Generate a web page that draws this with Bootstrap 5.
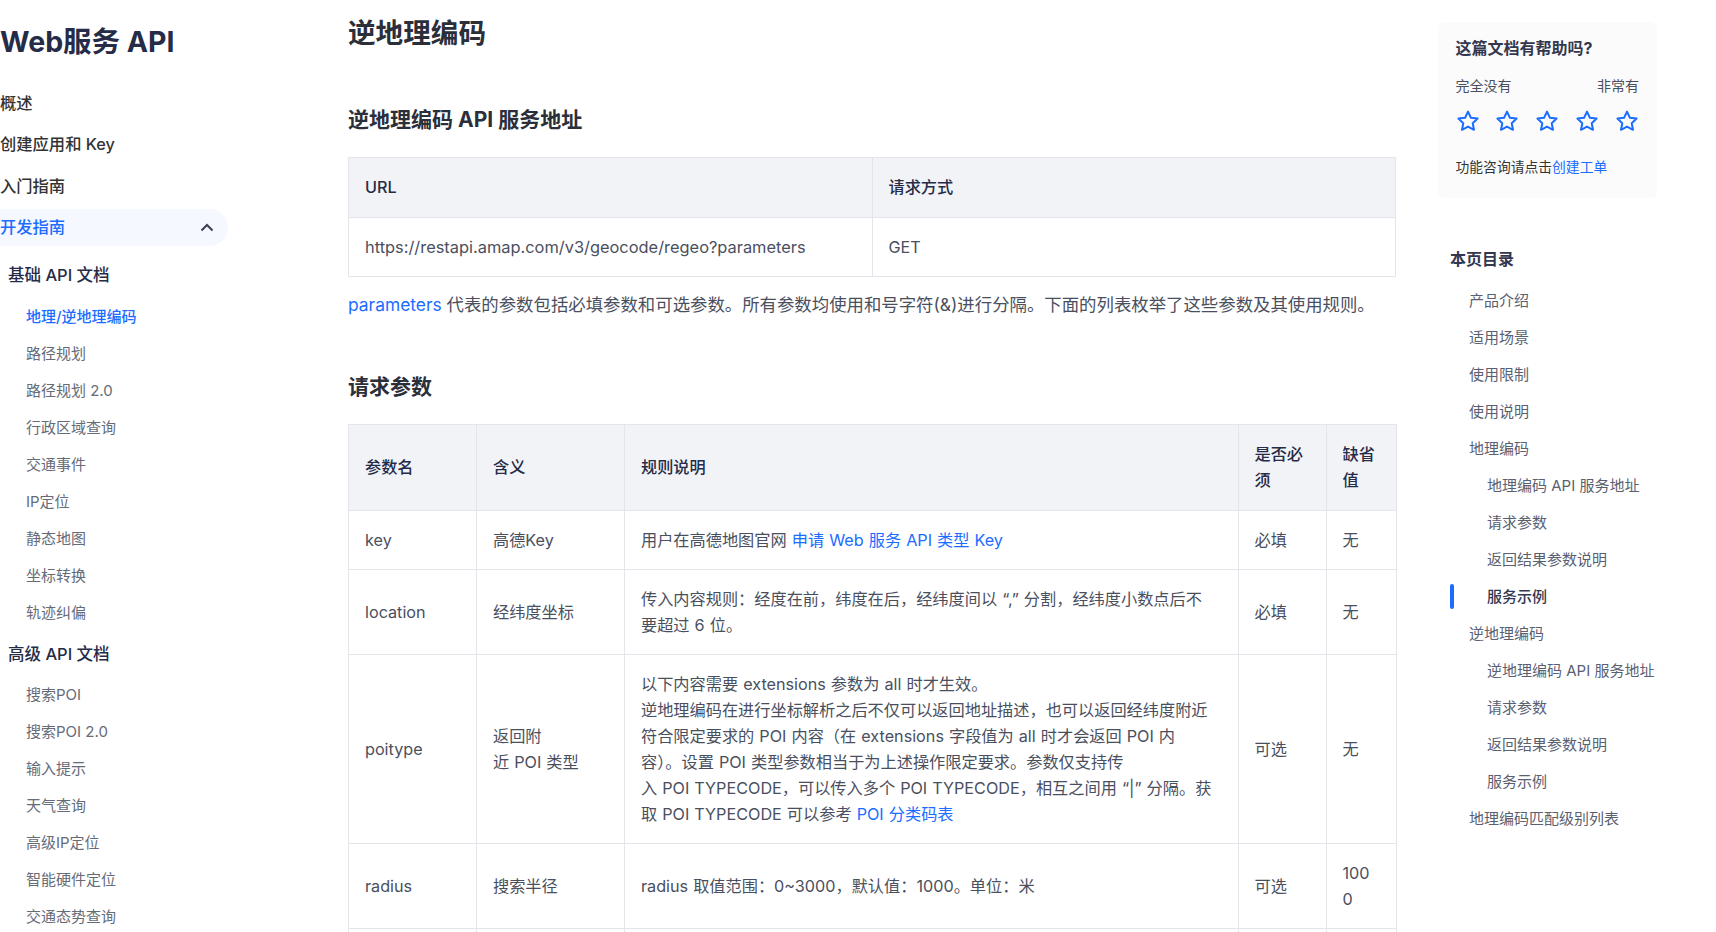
<!DOCTYPE html>
<html lang="zh">

<head>
  <meta charset="utf-8">
  <meta name="viewport" content="width=device-width">
  <title>逆地理编码</title>
  <link href="https://cdn.jsdelivr.net/npm/bootstrap@5.3.3/dist/css/bootstrap.min.css" rel="stylesheet" />
  <style>
    html, body { height: 932px; overflow: hidden; }
    body { font-family: Inter, "Noto Sans CJK SC", sans-serif; font-size: 16px; color: #4a4f60; background: #fff; }
    a { color: #1b6cff; text-decoration: none; }

    .side { width: 228px; }
    .side-title { font-size: 28.5px; line-height: 36px; font-weight: 700; color: #262b47; margin: 24px 0 24.5px; }
    .nav-top { height: 37px; margin-bottom: 4.6px; line-height: 37px; font-size: 16.3px; color: #333; font-weight: 500; }
    .nav-top.active { color: #1b6cff; background: #f5f8ff; border-radius: 0 19px 19px 0; }
    .nav-head { height: 37px; line-height: 37px; margin: 11px 0 3.5px; padding-left: 8px; font-size: 16.5px; color: #262b47; font-weight: 500; }
    .nav-head.next { margin-top: 5px; }
    .nav-sub { height: 37px; line-height: 37px; padding-left: 26px; font-size: 15px; color: #666b78; }
    .nav-sub.active { color: #1b6cff; font-weight: 500; }
    .chevron { width: 14px; height: 9px; margin-right: 14px; }

    .content { width: 1048px; margin-left: 120px; }
    .content h1 { font-size: 27.6px; line-height: 40px; font-weight: 700; color: #2b2f3a; margin: 13px 0 52px; }
    .content h2 { font-size: 21px; line-height: 30px; font-weight: 700; color: #2b2f3a; margin: 0 0 22px; }
    .content p { font-size: 17.4px; line-height: 26px; margin: 15px 0 54px; }
    .doc-table { table-layout: fixed; border-color: #e3e5ea; margin: 0; font-size: 16.2px; line-height: 26px; word-spacing: .5px; --bs-table-color: #4a4f60; }
    .doc-table > :not(caption) > * > * { padding: 16px; vertical-align: middle; word-break: break-all; }
    .doc-table > thead > tr > th { padding-bottom: 17px; background: #f2f3f7; color: #262b47; font-weight: 500; }
    .doc-table .url { font-size: 16.4px; word-spacing: 0; }
    .doc-table .empty-row td { height: 60px; }
    .c1 { width: 128px; } .c2 { width: 148px; } .c3 { width: 613.5px; } .c4 { width: 88px; } .c5 { width: 70.5px; }

    .right { width: 219px; margin-left: 42px; }
    .rate-card { height: 176px; margin-top: 22px; padding: 14px 18px 14px 17.5px; background: #fbfbfb; border-radius: 6px; font-size: 14px; }
    .rate-title { font-size: 16px; line-height: 24px; font-weight: 700; color: #333850; }
    .rate-labels { margin-top: 16px; line-height: 20px; color: #4a4f60; }
    .rate-stars { margin-top: 13px; }
    .rate-stars svg { width: 24px; height: 24px; }
    .rate-foot { margin-top: 24px; font-size: 13.8px; line-height: 20px; color: #333; }
    .toc { margin-top: 49px; font-size: 15px; color: #5a5f72; }
    .toc-title { margin-left: 12px; font-size: 16px; line-height: 24px; font-weight: 700; color: #333850; margin-bottom: 11px; }
    .toc-item { height: 37.04px; line-height: 37px; padding-left: 31px; white-space: nowrap; }
    .toc-item.lv2 { padding-left: 49px; }
    .toc-item.active { font-weight: 500; color: #333850; }
    .toc-item.active::before { content: ""; position: absolute; left: 12px; top: 6px; width: 4px; height: 25px; border-radius: 2px; background: #1b6cff; }
  </style>
</head>

<body class="d-flex align-items-start">
  <nav class="side flex-shrink-0">
    <div class="side-title">Web服务 API</div>
    <div class="nav-top">概述</div>
    <div class="nav-top">创建应用和 Key</div>
    <div class="nav-top">入门指南</div>
    <div class="nav-top active d-flex justify-content-between align-items-center">
      开发指南
      <svg class="chevron" viewBox="0 0 14 9" fill="none" stroke="#3a4055" stroke-width="2"><path d="M1.5 7.5 7 2l5.5 5.5" /></svg>
    </div>
    <div class="nav-head">基础 API 文档</div>
    <div class="nav-sub active">地理/逆地理编码</div>
    <div class="nav-sub">路径规划</div>
    <div class="nav-sub">路径规划 2.0</div>
    <div class="nav-sub">行政区域查询</div>
    <div class="nav-sub">交通事件</div>
    <div class="nav-sub">IP定位</div>
    <div class="nav-sub">静态地图</div>
    <div class="nav-sub">坐标转换</div>
    <div class="nav-sub">轨迹纠偏</div>
    <div class="nav-head next">高级 API 文档</div>
    <div class="nav-sub">搜索POI</div>
    <div class="nav-sub">搜索POI 2.0</div>
    <div class="nav-sub">输入提示</div>
    <div class="nav-sub">天气查询</div>
    <div class="nav-sub">高级IP定位</div>
    <div class="nav-sub">智能硬件定位</div>
    <div class="nav-sub">交通态势查询</div>
  </nav>

  <main class="content flex-shrink-0">
    <h1>逆地理编码</h1>
    <h2>逆地理编码 API 服务地址</h2>
    <table class="table table-bordered doc-table">
      <thead>
        <tr><th>URL</th><th>请求方式</th></tr>
      </thead>
      <tbody>
        <tr><td class="url">https://restapi.amap.com/v3/geocode/regeo?parameters</td><td>GET</td></tr>
      </tbody>
    </table>
    <p><a href="#">parameters</a> 代表的参数包括必填参数和可选参数。所有参数均使用和号字符(&amp;)进行分隔。下面的列表枚举了这些参数及其使用规则。</p>
    <h2>请求参数</h2>
    <table class="table table-bordered doc-table">
      <colgroup>
        <col class="c1"><col class="c2"><col class="c3"><col class="c4"><col class="c5">
      </colgroup>
      <thead>
        <tr><th>参数名</th><th>含义</th><th>规则说明</th><th>是否必须</th><th>缺省值</th></tr>
      </thead>
      <tbody>
        <tr>
          <td>key</td><td>高德Key</td>
          <td>用户在高德地图官网 <a href="#">申请 Web 服务 API 类型 Key</a></td>
          <td>必填</td><td>无</td>
        </tr>
        <tr>
          <td>location</td><td>经纬度坐标</td>
          <td>传入内容规则：经度在前，纬度在后，经纬度间以 “,” 分割，经纬度小数点后不<br>要超过 6 位。</td>
          <td>必填</td><td>无</td>
        </tr>
        <tr>
          <td>poitype</td><td>返回附<br>近 POI 类型</td>
          <td>以下内容需要 extensions 参数为 all 时才生效。<br>
            逆地理编码在进行坐标解析之后不仅可以返回地址描述，也可以返回经纬度附近<br>
            符合限定要求的 POI 内容（在 extensions 字段值为 all 时才会返回 POI 内<br>
            容）。设置 POI 类型参数相当于为上述操作限定要求。参数仅支持传<br>
            入 POI TYPECODE，可以传入多个 POI TYPECODE，相互之间用 “|” 分隔。获<br>
            取 POI TYPECODE 可以参考 <a href="#">POI 分类码表</a></td>
          <td>可选</td><td>无</td>
        </tr>
        <tr>
          <td>radius</td><td>搜索半径</td>
          <td>radius 取值范围：0~3000，默认值：1000。单位：米</td>
          <td>可选</td><td>100<br>0</td>
        </tr>
        <tr class="empty-row"><td></td><td></td><td></td><td></td><td></td></tr>
      </tbody>
    </table>
  </main>

  <aside class="right flex-shrink-0">
    <div class="rate-card">
      <div class="rate-title">这篇文档有帮助吗?</div>
      <div class="rate-labels d-flex justify-content-between"><span>完全没有</span><span>非常有</span></div>
      <div class="rate-stars d-flex justify-content-between" id="stars"></div>
      <div class="rate-foot">功能咨询请点击<a href="#">创建工单</a></div>
    </div>
    <div class="toc">
      <div class="toc-title">本页目录</div>
      <div class="toc-item">产品介绍</div>
      <div class="toc-item">适用场景</div>
      <div class="toc-item">使用限制</div>
      <div class="toc-item">使用说明</div>
      <div class="toc-item">地理编码</div>
      <div class="toc-item lv2">地理编码 API 服务地址</div>
      <div class="toc-item lv2">请求参数</div>
      <div class="toc-item lv2">返回结果参数说明</div>
      <div class="toc-item lv2 active position-relative">服务示例</div>
      <div class="toc-item">逆地理编码</div>
      <div class="toc-item lv2">逆地理编码 API 服务地址</div>
      <div class="toc-item lv2">请求参数</div>
      <div class="toc-item lv2">返回结果参数说明</div>
      <div class="toc-item lv2">服务示例</div>
      <div class="toc-item">地理编码匹配级别列表</div>
    </div>
  </aside>

  <script src="https://cdn.jsdelivr.net/npm/bootstrap@5.3.3/dist/js/bootstrap.bundle.min.js"></script>
  <script>
    const stars = document.getElementById('stars')
    for (let i = 0; i < 5; i++) {
      stars.innerHTML += '<svg viewBox="0 0 24 24" fill="none" stroke="#1b6cff" stroke-width="2" stroke-linejoin="round"><path d="M12 2.6l2.9 6.1 6.7.9-4.9 4.6 1.3 6.6-6-3.2-6 3.2 1.3-6.6-4.9-4.6 6.7-.9z" /></svg>'
    }
  </script>
</body>

</html>
